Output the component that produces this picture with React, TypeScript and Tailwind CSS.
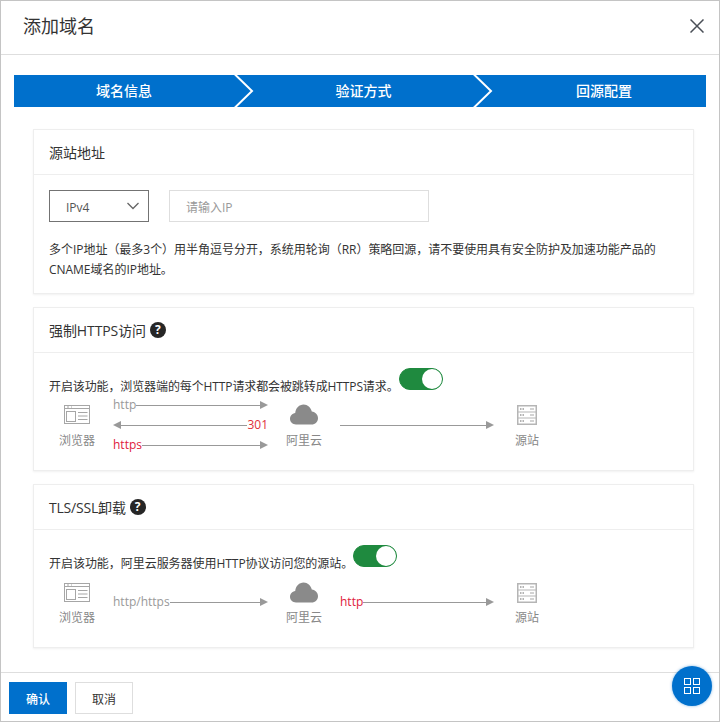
import React from "react";

const font = { fontFamily: '"Open Sans","Noto Sans CJK SC",sans-serif' };

function BrowserIcon() {
  return (
    <svg width="28" height="21" viewBox="0 0 28 21" fill="none" stroke="#a6a6a6" strokeWidth="1">
      <rect x="1.5" y="1.5" width="25" height="18" />
      <path d="M1.5 4.5H26.5" />
      <path d="M4 3H6M8 3H9" />
      <rect x="3.5" y="7.5" width="9" height="10" />
      <path d="M15 8.5H24.5M15 12H24.5M15 15.5H24.5" />
    </svg>
  );
}

function CloudIcon() {
  return (
    <svg width="28" height="21" viewBox="0 0 28 21">
      <path
        fill="#8a8a8a"
        d="M6 20.5C2.6 20.5 0 18 0 14.8C0 11.8 2.2 9.5 5.2 9C5.8 4 9.2 0.5 13.6 0.5C17.6 0.5 20.8 3.4 21.8 7.4C25.4 7.8 28 10.8 28 14.2C28 17.8 25.2 20.5 21.6 20.5Z"
      />
    </svg>
  );
}

function ServerIcon() {
  return (
    <svg width="20" height="20" viewBox="0 0 20 20" fill="none">
      <rect x="0.75" y="0.75" width="18.5" height="18.5" fill="none" stroke="#b5b5b5" strokeWidth="1.5" />
      <path d="M1 7H19M1 13H19" stroke="#b5b5b5" strokeWidth="1.2" />
      <path d="M3 4H4.5M5.5 4H7M3 10H4.5M5.5 10H7M3 16H4.5M5.5 16H7" stroke="#9a9a9a" strokeWidth="1.5" />
      <path d="M13 4H17M13 10H17M13 16H17" stroke="#c4c4c4" strokeWidth="1.5" />
    </svg>
  );
}

function Line({ dir = "right" }: { dir?: "right" | "left" }) {
  return (
    <div className="flex flex-1 items-center">
      {dir === "left" && (
        <span className="w-0 h-0 border-y-[4px] border-y-transparent border-r-[8px] border-r-[#999]" />
      )}
      <div className="flex-1 h-px bg-[#999]" />
      {dir === "right" && (
        <span className="w-0 h-0 border-y-[4px] border-y-transparent border-l-[8px] border-l-[#999]" />
      )}
    </div>
  );
}

function Node({ icon, label, w, gap }: { icon: React.ReactNode; label: string; w: string; gap: string }) {
  return (
    <div className={`flex flex-col items-center shrink-0 ${w}`}>
      <div className="h-[21px] flex items-center justify-center">{icon}</div>
      <div className={`text-[12px] leading-[20px] text-[#888] ${gap}`}>{label}</div>
    </div>
  );
}

function Help() {
  return (
    <span className="ml-[4px] inline-flex w-[16px] h-[16px] rounded-full bg-[#262626] text-white text-[12px] font-bold items-center justify-center leading-none">
      ?
    </span>
  );
}

function Toggle() {
  return (
    <span className="inline-flex w-[44px] h-[22px] rounded-full bg-[#1f8a3f] border border-[#1f8a3f] items-center justify-end align-top">
      <span className="w-[20px] h-[20px] rounded-full bg-white" />
    </span>
  );
}

function Card({ title, help, tight, className, children }: { title: string; help?: boolean; tight?: string; className?: string; children: React.ReactNode }) {
  return (
    <section className={`border border-[#eeeeee] bg-white shadow-[0_1px_2px_rgba(0,0,0,0.06)] ${className ?? ""}`}>
      <div className="h-[45px] border-b border-[#eeeeee] pl-[15px] flex items-center text-[14px] text-[#333]">
        <span className={tight}>{title}</span>
        {help && <Help />}
      </div>
      {children}
    </section>
  );
}

function Chevron() {
  return (
    <svg width="20" height="32" viewBox="0 0 20 32" className="shrink-0">
      <rect width="20" height="32" fill="#0070cc" />
      <path d="M0.5 -1L18 16L0.5 33" fill="none" stroke="#fff" strokeWidth="2" />
    </svg>
  );
}

export default function App() {
  return (
    <div style={font} className="relative w-[720px] h-[722px] bg-white border border-[#c4c4c4] flex flex-col text-[#333] overflow-hidden">
      <header className="h-[54px] shrink-0 border-b border-[#dedede] pl-[22px] pr-[15px] flex items-center justify-between">
        <h1 className="text-[18px] text-[#333] font-normal pb-[2px]">添加域名</h1>
        <svg width="14" height="14" viewBox="0 0 14 14" fill="none" stroke="#4a4f57" strokeWidth="1.5" className="mb-[4px]">
          <path d="M0.5 0.5L13.5 13.5M13.5 0.5L0.5 13.5" />
        </svg>
      </header>

      <div className="mt-[20px] ml-[13px] w-[692px] h-[32px] shrink-0 flex bg-[#0070cc] text-white text-[14px] font-medium">
        <div className="w-[220px] pb-[2px] flex items-center justify-center">域名信息</div>
        <Chevron />
        <div className="w-[219px] pb-[2px] flex items-center justify-center">验证方式</div>
        <Chevron />
        <div className="w-[213px] pl-[9px] pb-[2px] flex items-center justify-center">回源配置</div>
      </div>

      <main className="flex-1 mt-[22px] ml-[32px] w-[661px] flex flex-col">
        <Card title="源站地址" className="h-[165px]">
          <div className="mt-[15px] ml-[15px] flex gap-[20px]">
            <div className="w-[100px] h-[32px] border border-[#737373] pl-[16px] pr-[9px] flex items-center justify-between text-[12px] text-[#555]">
              <span className="pt-[3px]">IPv4</span>
              <svg width="12" height="8" viewBox="0 0 12 8" fill="none" stroke="#666" strokeWidth="1.3">
                <path d="M0.5 1L6 6.5L11.5 1" />
              </svg>
            </div>
            <div className="w-[260px] h-[32px] border border-[#dedede] pl-[16px] pt-[3px] flex items-center text-[12px] text-[#999]">
              请输入IP
            </div>
          </div>
          <p className="mt-[18px] mx-[15px] text-[12px] leading-[20px] text-[#333] tracking-[-0.03px]">
            多个IP地址（最多3个）用半角逗号分开，系统用轮询（RR）策略回源，请不要使用具有安全防护及加速功能产品的CNAME域名的IP地址。
          </p>
        </Card>

        <Card title="强制HTTPS访问" help tight="tracking-[-0.1px]" className="h-[164px] mt-[13px]">
          <div className="mt-[15px] ml-[15px] flex items-start text-[12px] leading-[20px]">
            <span className="mt-[9px] tracking-[-0.11px]">开启该功能，浏览器端的每个HTTP请求都会被跳转成HTTPS请求。</span>
            <Toggle />
          </div>
          <div className="mt-[7px] ml-[15px] flex h-[62px] text-[12px]">
            <Node icon={<BrowserIcon />} label="浏览器" w="w-[56px]" gap="mt-[6px]" />
            <div className="ml-[8px] -mt-[9px] w-[155px] flex flex-col leading-[20px]">
              <div className="h-[20px] flex items-center text-[#999]"><span>http</span><Line /></div>
              <div className="h-[20px] flex items-center text-[#e0303c]"><Line dir="left" /><span>301</span></div>
              <div className="h-[20px] flex items-center text-[#e0203c]"><span>https</span><Line /></div>
            </div>
            <Node icon={<CloudIcon />} label="阿里云" w="w-[72px]" gap="mt-[6px]" />
            <div className="w-[154px] h-[42px] flex items-center"><Line /></div>
            <Node icon={<ServerIcon />} label="源站" w="ml-[14px] w-[38px]" gap="mt-[6px]" />
          </div>
        </Card>

        <Card title="TLS/SSL卸载" help tight="tracking-[-0.2px]" className="h-[164px] mt-[13px]">
          <div className="mt-[15px] ml-[15px] flex items-start text-[12px] leading-[20px]">
            <span className="mt-[9px] tracking-[-0.04px]">开启该功能，阿里云服务器使用HTTP协议访问您的源站。</span>
            <Toggle />
          </div>
          <div className="mt-[8px] ml-[15px] flex h-[56px] text-[12px]">
            <Node icon={<BrowserIcon />} label="浏览器" w="w-[56px]" gap="mt-[5px]" />
            <div className="ml-[8px] w-[155px] h-[40px] flex items-center text-[#999]">
              <span>http/https</span><Line />
            </div>
            <Node icon={<CloudIcon />} label="阿里云" w="w-[72px]" gap="mt-[5px]" />
            <div className="w-[154px] h-[40px] flex items-center text-[#e0203c]"><span>http</span><Line /></div>
            <Node icon={<ServerIcon />} label="源站" w="ml-[14px] w-[38px]" gap="mt-[5px]" />
          </div>
        </Card>
      </main>

      <footer className="h-[49px] shrink-0 border-t border-[#dedede] pt-[9px] pl-[8px] flex gap-[8px] text-[12px]">
        <button className="w-[58px] h-[32px] pt-[4px] bg-[#0070cc] text-white font-medium">确认</button>
        <button className="w-[58px] h-[32px] pt-[4px] border border-[#dedede] text-[#333]">取消</button>
      </footer>

      <div className="absolute left-[671px] top-[665px] w-[40px] h-[40px] rounded-full bg-[#0070cc] shadow-[0_0_3px_rgba(0,112,204,0.5)] flex items-center justify-center">
        <svg width="16" height="16" viewBox="0 0 16 16" fill="none" stroke="#fff" strokeWidth="1">
          <rect x="0.5" y="0.5" width="6" height="6" />
          <rect x="9.5" y="0.5" width="6" height="6" />
          <rect x="0.5" y="9.5" width="6" height="6" />
          <rect x="9.5" y="9.5" width="6" height="6" />
        </svg>
      </div>
    </div>
  );
}
